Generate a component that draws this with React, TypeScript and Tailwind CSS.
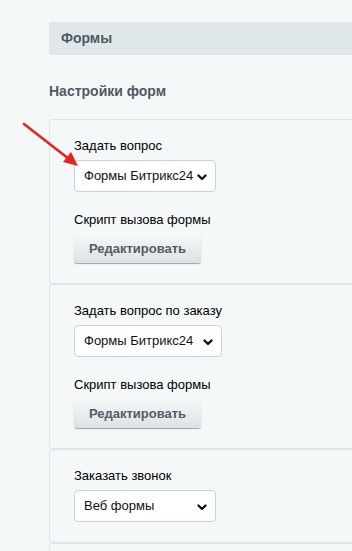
import React from "react";

const Chevron = () => (
  <svg width="10" height="7" viewBox="0 0 10 7" className="absolute right-[8px] top-[13px]" fill="none">
    <path d="M1.5 1.5 L5 5 L8.5 1.5" stroke="#111" strokeWidth="2.3" strokeLinecap="round" strokeLinejoin="round" />
  </svg>
);

function Select({ value, width }: { value: string; width: string }) {
  return (
    <div className={`relative h-[32px] ${width} rounded-[4px] border border-[#c9d3d9] bg-white`}>
      <div className="pl-[9px] text-[13px] leading-[30px] text-[#111]">{value}</div>
      <Chevron />
    </div>
  );
}

function Label({ children }: { children: React.ReactNode }) {
  return <div className="mb-[6px] text-[13px] leading-[16px] text-black">{children}</div>;
}

function EditButton() {
  return (
    <div className="h-[29px] w-[127px] rounded-[3px] bg-gradient-to-b from-[#f6f8f9] to-[#dce2e4] text-center text-[13px] font-bold leading-[29px] text-[#535c69] shadow-[0_1px_1px_rgba(0,0,0,0.35)]">
      Редактировать
    </div>
  );
}

function Panel({ children }: { children: React.ReactNode }) {
  return (
    <div className="rounded-l-[3px] border border-r-0 border-[#dde5e8] pl-[24px] pt-[18px]">{children}</div>
  );
}

function Field({ children }: { children: React.ReactNode }) {
  return <div className="pb-[20px]">{children}</div>;
}

export default function App() {
  return (
    <div
      className="relative h-[551px] w-[352px] overflow-hidden bg-[#f5f8f9] pl-[49px] pt-[22px]"
      style={{ fontFamily: '"Liberation Sans", Arial, sans-serif' }}
    >
      <div className="flex h-[33px] items-center rounded-l-[3px] bg-[#e0e7e9] pl-[12px] text-[14px] font-bold text-[#4f5966]">
        Формы
      </div>
      <div className="mt-[28px] text-[14px] font-bold leading-[16px] text-[#4f5966]">Настройки форм</div>
      <div className="mt-[20px]">
        <Panel>
          <Field>
            <Label>Задать вопрос</Label>
            <Select value="Формы Битрикс24" width="w-[142px]" />
          </Field>
          <Field>
            <Label>Скрипт вызова формы</Label>
            <EditButton />
          </Field>
        </Panel>
        <Panel>
          <Field>
            <Label>Задать вопрос по заказу</Label>
            <Select value="Формы Битрикс24" width="w-[148px]" />
          </Field>
          <Field>
            <Label>Скрипт вызова формы</Label>
            <EditButton />
          </Field>
        </Panel>
        <Panel>
          <Field>
            <Label>Заказать звонок</Label>
            <Select value="Веб формы" width="w-[142px]" />
          </Field>
        </Panel>
        <Panel>
          <div className="h-[20px]" />
        </Panel>
      </div>
      <svg className="absolute left-0 top-0" width="352" height="551" viewBox="0 0 352 551" fill="none">
        <line x1="24" y1="124" x2="69" y2="159" stroke="#e8221c" strokeWidth="2.6" strokeLinecap="round" />
        <polygon points="78,166 63,162 71,152" fill="#e8221c" />
      </svg>
    </div>
  );
}
